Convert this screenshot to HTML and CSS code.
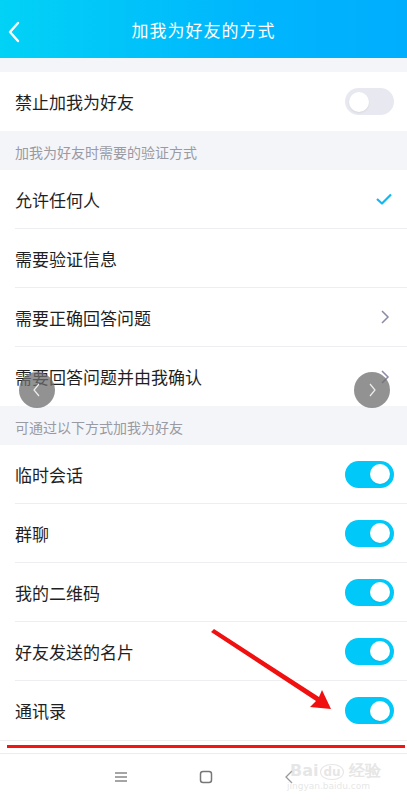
FILE: index.html
```html
<!DOCTYPE html>
<html lang="zh">
<head>
<meta charset="utf-8">
<link rel="stylesheet" href="styles.css">
</head>
<body>
<div class="screen">
  <header class="topbar">
    <svg class="back" width="14" height="22" viewBox="0 0 14 22"><path d="M11 2 L3 11 L11 20" fill="none" stroke="#fff" stroke-width="2.4" stroke-linecap="round" stroke-linejoin="round"/></svg>
    <h1 class="title">加我为好友的方式</h1>
  </header>
  <div class="gap"></div>
  <div class="group">
    <div class="row"><span class="label">禁止加我为好友</span><span class="switch off"><span class="knob"></span></span></div>
  </div>
  <div class="section">加我为好友时需要的验证方式</div>
  <div class="group">
    <div class="row"><span class="label">允许任何人</span>
      <svg class="check" width="18" height="14" viewBox="0 0 18 14"><path d="M2 7 L7 11.5 L16 2.5" fill="none" stroke="#12b7f0" stroke-width="2.2" stroke-linejoin="round"/></svg></div>
    <div class="row"><span class="label">需要验证信息</span></div>
    <div class="row"><span class="label">需要正确回答问题</span><svg class="chev" width="10" height="16" viewBox="0 0 10 16"><path d="M2 2 L8 8 L2 14" fill="none" stroke="#8a8aa8" stroke-width="1.5"/></svg></div>
    <div class="row last"><span class="label">需要回答问题并由我确认</span><svg class="chev" width="10" height="16" viewBox="0 0 10 16"><path d="M2 2 L8 8 L2 14" fill="none" stroke="#8a8aa8" stroke-width="1.5"/></svg></div>
  </div>
  <div class="section">可通过以下方式加我为好友</div>
  <div class="group">
    <div class="row"><span class="label">临时会话</span><span class="switch on"><span class="knob"></span></span></div>
    <div class="row"><span class="label">群聊</span><span class="switch on"><span class="knob"></span></span></div>
    <div class="row"><span class="label">我的二维码</span><span class="switch on"><span class="knob"></span></span></div>
    <div class="row"><span class="label">好友发送的名片</span><span class="switch on"><span class="knob"></span></span></div>
    <div class="row"><span class="label">通讯录</span><span class="switch on"><span class="knob"></span></span></div>
  </div>
  <div class="redline"></div>
  <nav class="navbar">
    <svg width="14" height="12" viewBox="0 0 14 12"><path d="M1 2H13M1 6H13M1 10H13" stroke="#888" stroke-width="1.3"/></svg>
    <svg width="14" height="14" viewBox="0 0 14 14"><rect x="1.5" y="1.5" width="11" height="11" rx="2.5" fill="none" stroke="#777" stroke-width="1.5"/></svg>
    <svg width="10" height="16" viewBox="0 0 10 16"><path d="M8 2 L2 8 L8 14" fill="none" stroke="#999" stroke-width="1.3"/></svg>
  </nav>

  <div class="pager left"><svg width="10" height="16" viewBox="0 0 10 16"><path d="M7 2 L2 8 L7 14" fill="none" stroke="#eee" stroke-width="1.2"/></svg></div>
  <div class="pager right"><svg width="10" height="16" viewBox="0 0 10 16"><path d="M3 2 L8 8 L3 14" fill="none" stroke="#eee" stroke-width="1.2"/></svg></div>

  <svg class="arrow" width="407" height="800" viewBox="0 0 407 800">
    <polygon points="211,632 214,629 319,697 322,690 331,709 310,707 316,701" fill="#f01010"/>
  </svg>

  <div class="watermark">
    <div class="wm-top">Bai<span class="paw">du</span> 经验</div>
    <div class="wm-bottom">jingyan.baidu.com</div>
  </div>
</div>
</body>
</html>
```

FILE: styles.css
```css
* { box-sizing: border-box; }
html, body { margin: 0; padding: 0; }
body {
  font-family: "Noto Sans CJK SC", "Noto Sans", sans-serif;
  background: #fff;
  width: 407px;
  height: 800px;
  overflow: hidden;
}
.screen { position: relative; width: 407px; height: 800px; background: #f4f5f9; }
.topbar {
  height: 58px;
  background: linear-gradient(90deg, #02d2f6 0%, #00b6fd 60%, #00aefe 100%);
  display: flex;
  align-items: center;
  justify-content: center;
  position: relative;
}
.back { position: absolute; left: 7px; top: 21px; }
.title { margin: 0; color: #fff; font-size: 17px; font-weight: 400; letter-spacing: 1px; }
.gap { height: 14px; }
.group { background: #fff; }
.row {
  height: 59px;
  margin-left: 15px;
  padding-right: 13px;
  display: flex;
  align-items: center;
  justify-content: space-between;
  border-bottom: 1px solid #eeeef2;
}
.group > .row:last-child { border-bottom: none; }
.group:first-of-type .row { height: 58px; }
.label { font-size: 17px; color: #1f1f1f; }
.section {
  height: 39px;
  padding-left: 15px;
  padding-top: 11px;
  font-size: 14px;
  color: #9a9aa2;
}
.switch {
  width: 49px;
  height: 27px;
  border-radius: 14px;
  display: flex;
  align-items: center;
  padding: 0 4px;
}
.switch.off { background: #e8e9f0; justify-content: flex-start; }
.switch.on { background: #00c8f8; justify-content: flex-end; }
.knob { width: 20px; height: 20px; border-radius: 50%; background: #fff; box-shadow: 0 1px 2px rgba(0,0,0,0.08); }
.check { margin-right: 1px; }
.chev { margin-right: 4px; }
.redline {
  height: 14px;
  background: #fff;
  border-top: 1px solid #eeeef2;
  border-bottom: 1px solid #ececec;
  position: relative;
}
.redline::after {
  content: "";
  position: absolute;
  left: 7px;
  right: 2px;
  top: 4px;
  height: 3px;
  background: #f41414;
}
.navbar {
  height: 48px;
  background: #fff;
  display: flex;
  align-items: center;
  justify-content: center;
  gap: 71px;
  padding-bottom: 2px;
}
.pager {
  position: absolute;
  top: 372px;
  width: 36px;
  height: 36px;
  border-radius: 50%;
  background: rgba(110,110,110,0.75);
  display: flex;
  align-items: center;
  justify-content: center;
}
.pager.left { left: 19px; }
.pager.right { left: 354px; }
.arrow { position: absolute; left: 0; top: 0; pointer-events: none; }
.watermark {
  position: absolute;
  left: 290px;
  top: 762px;
  color: rgba(205,205,205,0.5);
  font-family: "DejaVu Sans", sans-serif;
  font-weight: 700;
}
.wm-top { font-size: 16px; line-height: 18px; }
.paw { font-size: 12px; border: 1px solid rgba(205,205,205,0.5); border-radius: 50%; padding: 0 2px; margin-left: 2px; }
.wm-bottom { font-size: 9px; font-weight: 400; margin-left: -3px; }
```
